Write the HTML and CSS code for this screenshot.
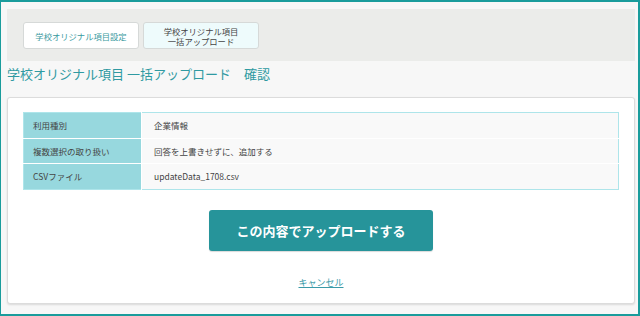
FILE: index.html
```html
<!DOCTYPE html>
<html lang="ja">
<head>
    <meta charset="UTF-8">
    <title>学校オリジナル項目 一括アップロード 確認</title>
    <link rel="stylesheet" href="styles.css">
</head>
<body>

<div class="frame">
    <div class="tab-bar">
        <a class="tab" href="#">学校オリジナル項目設定</a>
        <a class="tab tab-active" href="#">学校オリジナル項目<br>一括アップロード</a>
    </div>

    <h1 class="page-title">学校オリジナル項目 一括アップロード　確認</h1>

    <div class="card">
        <table class="confirm-table">
            <tr>
                <th>利用種別</th>
                <td>企業情報</td>
            </tr>
            <tr>
                <th>複数選択の取り扱い</th>
                <td>回答を上書きせずに、追加する</td>
            </tr>
            <tr>
                <th>CSVファイル</th>
                <td>updateData_1708.csv</td>
            </tr>
        </table>

        <div class="actions">
            <button class="upload-button">この内容でアップロードする</button>
            <a class="cancel-link" href="#">キャンセル</a>
        </div>
    </div>
</div>

</body>
</html>
```

FILE: styles.css
```css
html, body {
    margin: 0;
    padding: 0;
}

body {
    font-family: "Noto Sans CJK JP", "Noto Sans", sans-serif;
    color: #444;
}

.frame {
    box-sizing: border-box;
    width: 640px;
    height: 316px;
    border: 2px solid #1a9c9c;
    border-left-width: 1px;
    background-color: #f7f7f7;
    padding: 7px 3px 0 6px;
}

/* タブ */
.tab-bar {
    display: flex;
    gap: 4px;
    height: 52px;
    box-sizing: border-box;
    padding: 13px 16px 12px;
    background-color: #ebecea;
}

.tab {
    box-sizing: border-box;
    width: 116px;
    height: 27px;
    display: flex;
    align-items: center;
    justify-content: center;
    text-align: center;
    font-size: 8.3px;
    line-height: 10px;
    text-decoration: none;
    border: 1px solid #d6d9d8;
    border-radius: 3px;
    background-color: #fff;
    color: #3a9aa0;
}

.tab-active {
    background-color: #eefbfc;
    color: #444;
}

.page-title {
    margin: 3px 0 13px;
    font-size: 13px;
    line-height: 20px;
    font-weight: normal;
    color: #2f9aa2;
}

/* 確認カード */
.card {
    box-sizing: border-box;
    height: 207px;
    background-color: #fff;
    border: 1px solid #dcdcdc;
    border-radius: 3px;
    box-shadow: 0 1px 2px rgba(0, 0, 0, 0.12);
    padding: 14px 15px 0;
}

.confirm-table {
    width: 100%;
    border-collapse: collapse;
    border: 1px solid #aee5ea;
    font-size: 8.5px;
}

.confirm-table th,
.confirm-table td {
    height: 24.6px;
    padding: 0;
    text-align: left;
    font-weight: normal;
    border-bottom: 1px solid #fff;
}

.confirm-table tr:last-child th,
.confirm-table tr:last-child td {
    border-bottom: none;
}

.confirm-table th {
    width: 108px;
    padding-left: 9px;
    background-color: #97d8de;
    border-right: 1px solid #fff;
    color: #444;
}

.confirm-table td {
    padding-left: 12px;
    background-color: #f9f9f9;
    color: #444;
}

.actions {
    display: flex;
    flex-direction: column;
    align-items: center;
    padding-top: 20px;
}

.upload-button {
    width: 224px;
    height: 41px;
    border: none;
    border-radius: 3px;
    background-color: #26949a;
    color: #fff;
    font-family: inherit;
    font-size: 13px;
    font-weight: bold;
    box-shadow: 0 1px 1px rgba(0, 0, 0, 0.15);
    cursor: pointer;
}

.cancel-link {
    margin-top: 25px;
    font-size: 9px;
    line-height: 14px;
    color: #3a9aa8;
    text-decoration: underline;
}
```
